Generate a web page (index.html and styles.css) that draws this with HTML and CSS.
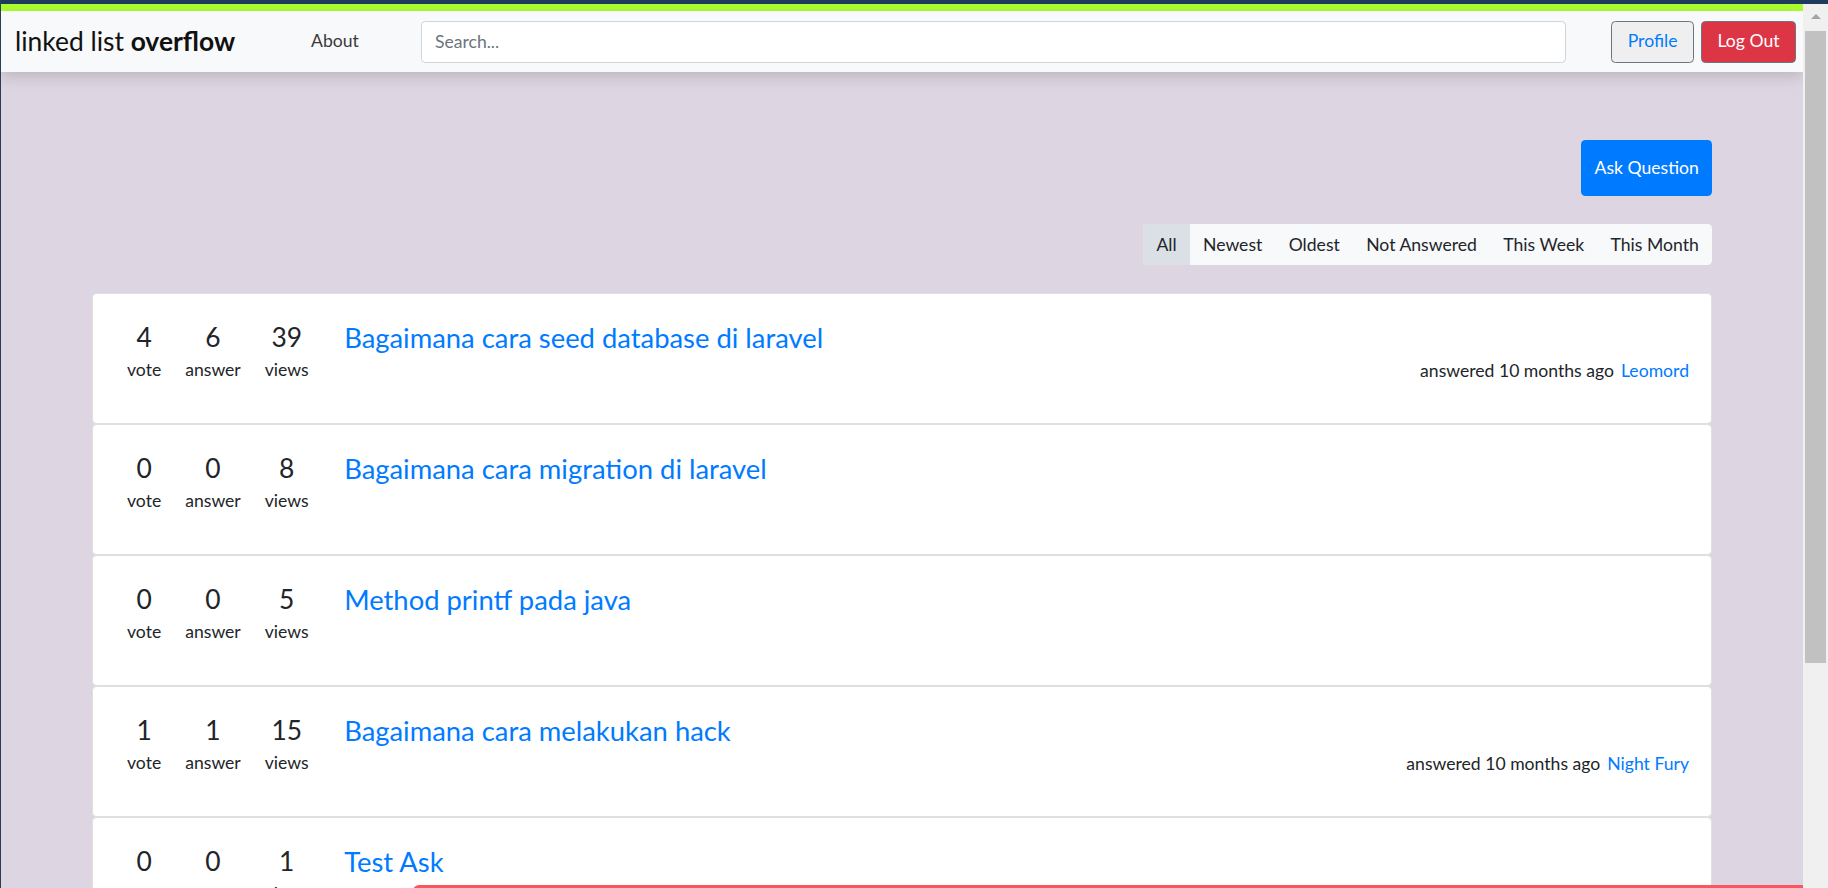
FILE: index.html
```html
<!DOCTYPE html>
<html lang="en">
<head>
<meta charset="utf-8">
<title>linked list overflow</title>
<link rel="stylesheet" href="styles.css">
</head>
<body>
<div class="window">
  <div class="topband"></div>
  <div class="viewport">
    <div class="page">
      <div class="accent"></div>
      <nav class="navbar">
        <a class="brand">linked list <b>overflow</b></a>
        <a class="nav-link">About</a>
        <input class="search" type="text" placeholder="Search...">
        <div class="nav-buttons">
          <a class="btn btn-profile">Profile</a>
          <a class="btn btn-logout">Log Out</a>
        </div>
      </nav>
      <main class="content">
        <div class="actions">
          <a class="btn-ask">Ask Question</a>
        </div>
        <div class="filters-row">
          <div class="filters">
            <a class="filter active">All</a>
            <a class="filter">Newest</a>
            <a class="filter">Oldest</a>
            <a class="filter">Not Answered</a>
            <a class="filter">This Week</a>
            <a class="filter">This Month</a>
          </div>
        </div>
        <div class="list">
          <div class="card">
            <div class="stats">
              <div class="stat"><div class="stat-num">4</div><div class="stat-label">vote</div></div>
              <div class="stat"><div class="stat-num">6</div><div class="stat-label">answer</div></div>
              <div class="stat"><div class="stat-num">39</div><div class="stat-label">views</div></div>
            </div>
            <div class="card-main">
              <a class="title">Bagaimana cara seed database di laravel</a>
              <div class="meta">answered 10 months ago<a class="user">Leomord</a></div>
            </div>
          </div>
          <div class="card">
            <div class="stats">
              <div class="stat"><div class="stat-num">0</div><div class="stat-label">vote</div></div>
              <div class="stat"><div class="stat-num">0</div><div class="stat-label">answer</div></div>
              <div class="stat"><div class="stat-num">8</div><div class="stat-label">views</div></div>
            </div>
            <div class="card-main">
              <a class="title">Bagaimana cara migration di laravel</a>
            </div>
          </div>
          <div class="card">
            <div class="stats">
              <div class="stat"><div class="stat-num">0</div><div class="stat-label">vote</div></div>
              <div class="stat"><div class="stat-num">0</div><div class="stat-label">answer</div></div>
              <div class="stat"><div class="stat-num">5</div><div class="stat-label">views</div></div>
            </div>
            <div class="card-main">
              <a class="title">Method printf pada java</a>
            </div>
          </div>
          <div class="card">
            <div class="stats">
              <div class="stat"><div class="stat-num">1</div><div class="stat-label">vote</div></div>
              <div class="stat"><div class="stat-num">1</div><div class="stat-label">answer</div></div>
              <div class="stat"><div class="stat-num">15</div><div class="stat-label">views</div></div>
            </div>
            <div class="card-main">
              <a class="title">Bagaimana cara melakukan hack</a>
              <div class="meta">answered 10 months ago<a class="user">Night Fury</a></div>
            </div>
          </div>
          <div class="card">
            <div class="stats">
              <div class="stat"><div class="stat-num">0</div><div class="stat-label">vote</div></div>
              <div class="stat"><div class="stat-num">0</div><div class="stat-label">answer</div></div>
              <div class="stat"><div class="stat-num">1</div><div class="stat-label">views</div></div>
            </div>
            <div class="card-main">
              <a class="title">Test Ask</a>
            </div>
          </div>
        </div>
      </main>
      <div class="toast"></div>
    </div>
    <div class="scrollbar">
      <div class="arrow"></div>
      <div class="thumb"></div>
    </div>
  </div>
</div>
</body>
</html>
```
FILE: styles.css
```css
* { box-sizing: border-box; }
html, body { margin: 0; height: 100%; overflow: hidden; }
body {
  font-family: Lato, "Segoe UI", "Liberation Sans", sans-serif;
  font-size: 17.6px;
  line-height: 1.5;
  color: #212529;
  background: #f0f0f0;
}
a { text-decoration: none; cursor: pointer; }

.window {
  width: 1828px;
  height: 888px;
  display: flex;
  flex-direction: column;
  border-left: 1px solid #2c3e55;
  background: #f0f0f0;
}
.topband { height: 4px; flex: none; background: #1f3a5c; }
.viewport { flex: 1; display: flex; min-height: 0; }
.page {
  flex: 1;
  position: relative;
  overflow: hidden;
  background: #ddd6e2;
}
.accent { height: 7px; background: #adff2f; }

.navbar {
  position: relative;
  z-index: 1;
  height: 61px;
  display: flex;
  align-items: center;
  padding: 0 7px 0 14px;
  background: #f8f9fa;
  box-shadow: 0 4px 14px rgba(0, 0, 0, 0.16);
}
.brand {
  font-size: 26.4px;
  color: #111;
  margin-right: 76px;
  white-space: nowrap;
}
.brand b { font-weight: 700; }
.nav-link {
  color: #3a3a3a;
  margin-right: 62px;
}
.search {
  flex: 1;
  height: 42px;
  border: 1px solid #ced4da;
  border-radius: 4.4px;
  padding: 0 13px;
  font: inherit;
  color: #495057;
  background: #fff;
  margin-right: 45px;
  outline: none;
}
.search::placeholder { color: #6c757d; }
.nav-buttons { display: flex; gap: 7px; }
.btn {
  height: 42px;
  display: inline-flex;
  align-items: center;
  padding: 0 15.5px;
  border: 1px solid #6c757d;
  border-radius: 4.4px;
}
.btn-profile { background: #efefef; color: #007bff; }
.btn-logout { background: #dc3545; color: #fff; }

.content { padding: 68px 91px 0; }
.actions { display: flex; justify-content: flex-end; }
.btn-ask {
  height: 56px;
  display: inline-flex;
  align-items: center;
  padding: 0 13.2px;
  background: #007bff;
  color: #fff;
  border-radius: 4.4px;
}
.filters-row { display: flex; justify-content: flex-end; margin-top: 28px; }
.filters {
  display: flex;
  background: #f8f9fa;
  border-radius: 4.4px;
  overflow: hidden;
}
.filter {
  height: 41px;
  line-height: 41px;
  padding: 0 13.2px;
  color: #212529;
}
.filter.active { background: #dae0e5; }

.list { margin-top: 28px; }
.card {
  height: 131px;
  display: flex;
  align-items: flex-start;
  padding: 28px 22px 0 22px;
  background: #fff;
  border: 1px solid #dfdfdf;
  border-radius: 4.4px;
}
.stats { display: flex; }
.stat { padding: 0 12px; text-align: center; }
.stat-num { font-size: 26.4px; line-height: 1.2; }
.stat-label { margin-top: 3px; line-height: 26.4px; }
.card-main { flex: 1; margin-left: 23.5px; }
.title {
  display: block;
  font-size: 27.4px;
  line-height: 31.7px;
  color: #007bff;
}
.meta {
  margin-top: 4px;
  line-height: 26.4px;
  text-align: right;
}
.user { color: #007bff; margin-left: 7px; }

.toast {
  position: absolute;
  left: 412px;
  right: 0;
  bottom: -37px;
  height: 40px;
  background: #f8585d;
  border-radius: 6px 0 0 0;
}

.scrollbar {
  width: 25px;
  flex: none;
  background: #f0f0f0;
  display: flex;
  flex-direction: column;
  align-items: center;
  padding-top: 10px;
}
.arrow {
  width: 0;
  height: 0;
  border-left: 5px solid transparent;
  border-right: 5px solid transparent;
  border-bottom: 5px solid #a3a3a3;
}
.thumb {
  width: 21px;
  height: 632px;
  margin-top: 12px;
  background: #c1c1c1;
}
```
